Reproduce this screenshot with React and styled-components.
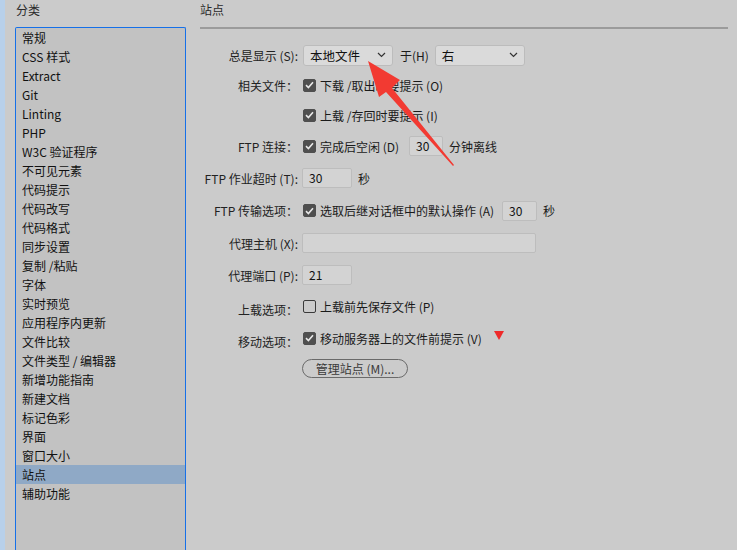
import React from "react";
import styled, { createGlobalStyle } from "styled-components";

const Global = createGlobalStyle`
  html, body { margin: 0; padding: 0; background: #cbcbcb; }
  *, *::before, *::after { box-sizing: border-box; }
  body { font-family: "Noto Sans CJK SC", "Noto Sans", sans-serif; font-size: 12px; color: #1e1e1e; }
`;

const Page = styled.div`
  position: relative;
  width: 737px;
  height: 550px;
  overflow: hidden;
  display: flex;
  background: #cbcbcb;
`;

const Strip = styled.div`
  width: 5px;
  background: #b8d0ea;
  flex: none;
`;

const Sidebar = styled.div`
  width: 181px;
  padding-left: 10px;
  flex: none;
  display: flex;
  flex-direction: column;
`;

const Title = styled.div`
  height: 27px;
  line-height: 20px;
  font-size: 12px;
  color: #2a2a2a;
  padding-left: ${(p) => p.$indent || 0}px;
`;

const ListBox = styled.ul`
  list-style: none;
  margin: 0;
  padding: 0;
  flex: 1;
  background: #c2c2c2;
  border: 1px solid #1670e8;
  border-bottom: none;
  border-top-left-radius: 2px;
  border-top-right-radius: 2px;
`;

const ListItem = styled.li`
  height: 19px;
  line-height: 19px;
  padding-left: 6px;
  font-size: 12px;
  color: #111;
  white-space: nowrap;
  background: ${(p) => (p.$selected ? "#8fa9c6" : "transparent")};
`;

const Main = styled.div`
  flex: 1;
  padding-left: 14px;
  padding-right: 9px;
  display: flex;
  flex-direction: column;
`;

const Divider = styled.div`
  height: 2px;
  background: #9b9b9b;
`;

const Form = styled.div`
  display: grid;
  grid-template-columns: 98px 1fr;
  column-gap: 4px;
  margin-top: 11px;
`;

const Label = styled.div`
  height: ${(p) => p.$h}px;
  display: flex;
  align-items: center;
  justify-content: flex-end;
  white-space: nowrap;
  color: #222;
  padding-top: ${(p) => p.$shift || 0}px;
`;

const Field = styled.div`
  height: ${(p) => p.$h}px;
  display: flex;
  align-items: center;
  white-space: nowrap;
  color: #1a1a1a;
`;

const Select = styled.div`
  width: ${(p) => p.$w}px;
  height: 21px;
  background: #dadada;
  border: 1px solid #bcbcbc;
  border-radius: 3px;
  display: flex;
  align-items: center;
  justify-content: space-between;
  padding: 0 6px 0 6px;
  font-size: 12.5px;
  color: #111;
  margin-left: ${(p) => p.$ml || 0}px;
`;

const Chevron = () => (
  <svg width="9" height="6" viewBox="0 0 9 6">
    <path d="M1 1 L4.5 4.5 L8 1" fill="none" stroke="#333" strokeWidth="1.2" />
  </svg>
);

const Inline = styled.span`
  margin-left: ${(p) => p.$ml || 0}px;
`;

const Box = styled.span`
  width: 13px;
  height: 13px;
  border-radius: 2px;
  flex: none;
  display: inline-flex;
  align-items: center;
  justify-content: center;
  background: ${(p) => (p.$checked ? "#4f4f4f" : "transparent")};
  border: 1px solid ${(p) => (p.$checked ? "#4f4f4f" : "#3a3a3a")};
  margin-left: 1px;
  margin-right: 4px;
`;

const Check = ({ checked }) => (
  <Box $checked={checked}>
    {checked && (
      <svg width="9" height="8" viewBox="0 0 9 8">
        <path d="M1 4.2 L3.4 6.5 L8 1.3" fill="none" stroke="#e8e8e8" strokeWidth="1.6" />
      </svg>
    )}
  </Box>
);

const TextInput = styled.div`
  width: ${(p) => p.$w}px;
  height: 20px;
  background: #d3d3d3;
  border: 1px solid #bdbdbd;
  border-radius: 2px;
  padding-left: 6px;
  line-height: 18px;
  font-size: 12px;
  color: #111;
  margin-left: ${(p) => p.$ml || 0}px;
  margin-right: 6px;
`;

const Triangle = styled.span`
  width: 0;
  height: 0;
  border-left: 5px solid transparent;
  border-right: 5px solid transparent;
  border-top: 9px solid #ee2a2a;
  margin-left: 12px;
  margin-top: -6px;
`;

const PillButton = styled.div`
  width: 106px;
  height: 19px;
  border: 1px solid #6a6a6a;
  border-radius: 10px;
  display: flex;
  align-items: center;
  justify-content: center;
  color: #3a3a3a;
  font-size: 12px;
`;

const Overlay = styled.svg`
  position: absolute;
  left: 0;
  top: 0;
  pointer-events: none;
`;

const items = [
  "常规", "CSS 样式", "Extract", "Git", "Linting", "PHP", "W3C 验证程序", "不可见元素",
  "代码提示", "代码改写", "代码格式", "同步设置", "复制 /粘贴", "字体", "实时预览",
  "应用程序内更新", "文件比较", "文件类型 / 编辑器", "新增功能指南", "新建文档",
  "标记色彩", "界面", "窗口大小", "站点", "辅助功能",
];

export default function App() {
  return (
    <>
      <Global />
      <Page>
        <Strip />
        <Sidebar>
          <Title $indent={1}>分类</Title>
          <ListBox>
            {items.map((t) => (
              <ListItem key={t} $selected={t === "站点"}>{t}</ListItem>
            ))}
          </ListBox>
        </Sidebar>
        <Main>
          <Title>站点</Title>
          <Divider />
          <Form>
            <Label $h={30}>总是显示 (S):</Label>
            <Field $h={30}>
              <Select $w={90} $ml={1}>本地文件<Chevron /></Select>
              <Inline $ml={7}>于(H)</Inline>
              <Select $w={90} $ml={6}>右<Chevron /></Select>
            </Field>

            <Label $h={30}>相关文件：</Label>
            <Field $h={30}><Check checked />下载 /取出时要提示 (O)</Field>

            <Label $h={30} />
            <Field $h={30}><Check checked />上载 /存回时要提示 (I)</Field>

            <Label $h={32}>FTP 连接：</Label>
            <Field $h={32}>
              <Check checked />完成后空闲 (D)
              <TextInput $w={34} $ml={10}>30</TextInput>分钟离线
            </Field>

            <Label $h={32}>FTP 作业超时 (T):</Label>
            <Field $h={32}><TextInput $w={50}>30</TextInput>秒</Field>

            <Label $h={33}>FTP 传输选项：</Label>
            <Field $h={33}>
              <Check checked />选取后继对话框中的默认操作 (A)
              <TextInput $w={35} $ml={8}>30</TextInput>秒
            </Field>

            <Label $h={32}>代理主机 (X):</Label>
            <Field $h={32}><TextInput $w={234} /></Field>

            <Label $h={32}>代理端口 (P):</Label>
            <Field $h={32}><TextInput $w={50}>21</TextInput></Field>

            <Label $h={31} $shift={5}>上载选项：</Label>
            <Field $h={31}><Check />上载前先保存文件 (P)</Field>

            <Label $h={32} $shift={6}>移动选项：</Label>
            <Field $h={32}><Check checked />移动服务器上的文件前提示 (V)<Triangle /></Field>

            <Label $h={28} />
            <Field $h={28}><PillButton>管理站点 (M)...</PillButton></Field>
          </Form>
        </Main>
        <Overlay width="737" height="550" viewBox="0 0 737 550">
          <polygon
            points="368,61 400,80 392,88 454,165 453,166 386,92 379,97"
            fill="#f23a32"
          />
        </Overlay>
      </Page>
    </>
  );
}
